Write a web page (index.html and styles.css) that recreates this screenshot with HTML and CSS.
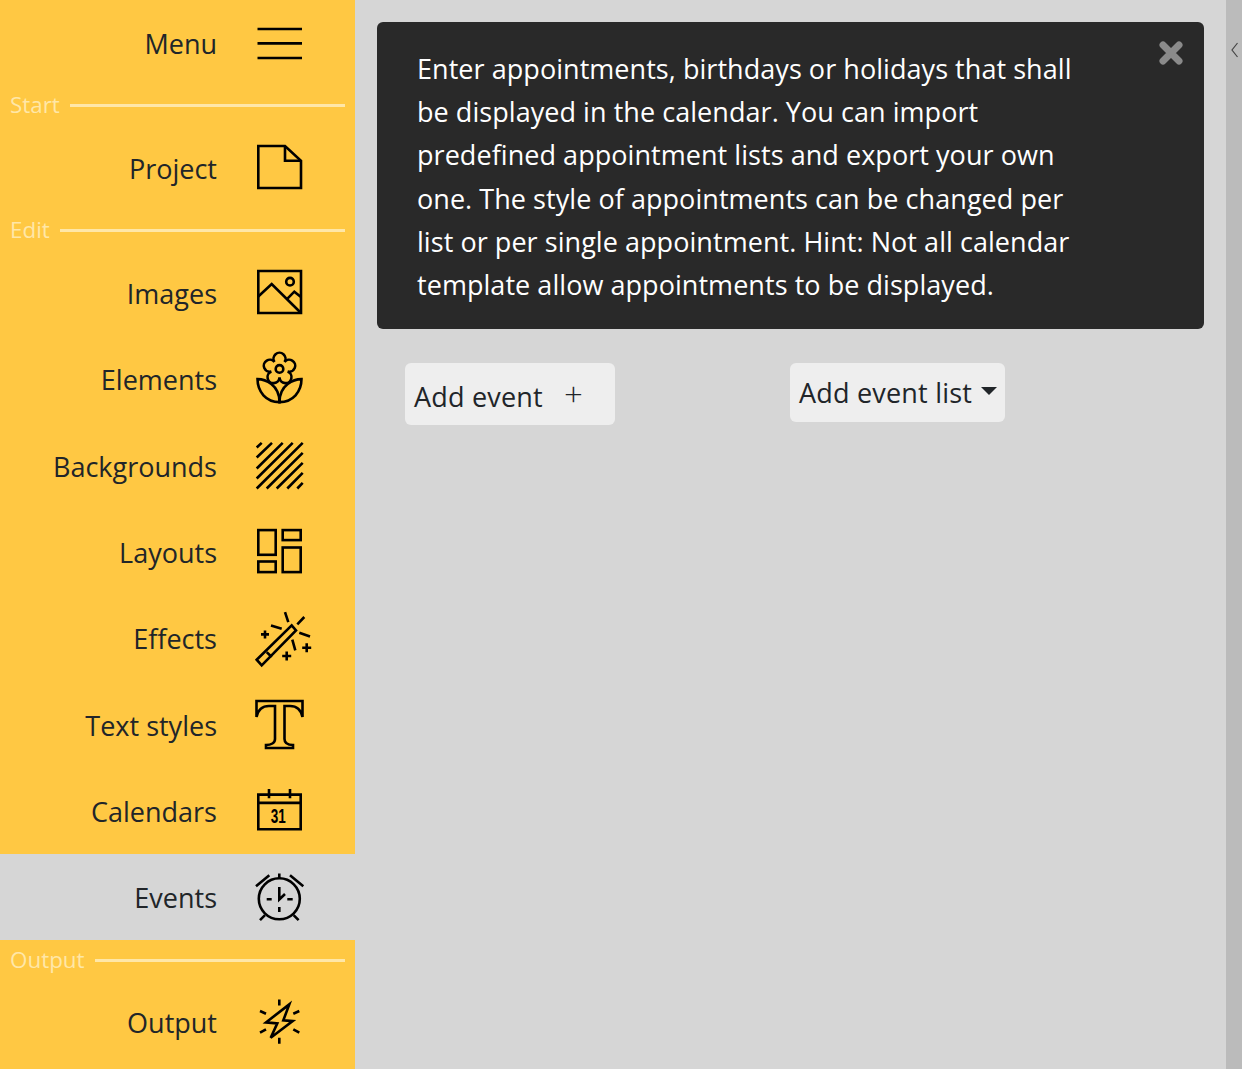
FILE: index.html
```html
<!DOCTYPE html>
<html lang="en">
<head>
    <meta charset="UTF-8">
    <meta name="viewport" content="width=device-width, initial-scale=1.0">
    <title>Calendar editor</title>
    <link rel="stylesheet" href="styles.css">
</head>
<body>
    <nav class="sidebar">
        <div class="nav-item nav-first">
            <span>Menu</span>
            <svg class="icon" viewBox="0 0 50 50"><path d="M2.5 11H47M2.5 25.4H47M2.5 40H47"/></svg>
        </div>

        <div class="nav-label"><span>Start</span></div>
        <div class="nav-item">
            <span>Project</span>
            <svg class="icon" viewBox="0 0 50 50"><path d="M3.3 4H30L46 18.7V46H3.3Z"/><path d="M30 4V18.7H46"/></svg>
        </div>

        <div class="nav-label"><span>Edit</span></div>
        <div class="nav-item">
            <span>Images</span>
            <svg class="icon" viewBox="0 0 50 50"><path d="M3.3 4H46V46H3.3Z"/><path d="M3 29.7L16.7 17L46 46"/><path d="M31.7 32.3L39.3 24.7L46 30"/><circle cx="35" cy="14.7" r="3.8"/></svg>
        </div>
        <div class="nav-item">
            <span>Elements</span>
            <svg class="icon" viewBox="0 1.4 50 50">
                <path d="M19.5 10.4A6 6 0 1 1 29.5 10.4A6 6 0 1 1 32.6 19.9A6 6 0 1 1 24.5 25.8A6 6 0 1 1 16.4 19.9A6 6 0 1 1 19.5 10.4Z"/>
                <circle cx="24.5" cy="17.3" r="3.8"/>
                <path d="M2.5 27.5C10 27.5 24.5 33 24.5 50.5C11 50.5 2.5 40 2.5 27.5Z"/>
                <path d="M46.5 27.5C39 27.5 24.5 33 24.5 50.5C38 50.5 46.5 40 46.5 27.5Z"/>
            </svg>
        </div>
        <div class="nav-item">
            <span>Backgrounds</span>
            <svg class="icon" viewBox="0 -1.2 50 50"><path d="M1.7 6.3L6.7 1.7M1.7 16.3L17 1.7M1.7 27.3L27.7 1.7M1.7 37.3L37.7 1.7M1.7 47.3L47.7 1.7M11.7 47.3L47.7 11.7M21.7 47.3L47.7 21.7M32.3 47.3L47.7 31.7M42.3 47.3L47.7 41.7"/></svg>
        </div>
        <div class="nav-item">
            <span>Layouts</span>
            <svg class="icon" viewBox="0 0 50 50"><rect x="3.3" y="4.1" width="17.4" height="24.7"/><rect x="3.3" y="35.5" width="17.4" height="10.6"/><rect x="27.7" y="4.1" width="18" height="10"/><rect x="27.7" y="21.5" width="18" height="24.6"/></svg>
        </div>
        <div class="nav-item">
            <span>Effects</span>
            <svg class="icon" viewBox="0 0 50 50"><path d="M1.7 46.7L36.7 12.4L41 17.4L6.7 52.4Z"/><path d="M11.7 39.1L16.7 44M30 -.9L33.3 9.1M42.3 11.4L49.3 4M16 12.4L26.7 15.7M44.3 19.7L55 23.4M37.3 26.7L40.3 37.4M6 21.4H14M10 17.4V25.4M47.2 34.7H56.2M51.7 30.2V39.2M27.2 43H36.2M31.7 38.5V47.5"/></svg>
        </div>
        <div class="nav-item">
            <span>Text styles</span>
            <svg class="icon" viewBox="0 0 50 50"><path d="M1.5 2H47.5V18C46 11 42 7 35 7H29.5V40C29.5 44 33 46 38 46V49H11V46C16 46 20 44 20 40V7H14C7 7 3 11 1.5 18Z"/></svg>
        </div>
        <div class="nav-item">
            <span>Calendars</span>
            <svg class="icon" viewBox="0 0 50 50"><path d="M3.3 9.6H45.7V44.3H3.3ZM3.3 17.9H45.7M14 3.9V13.3M35 3.9V13.3"/><text class="cal-day" x="15.7" y="38" textLength="15" lengthAdjust="spacingAndGlyphs">31</text></svg>
        </div>
        <div class="nav-item active">
            <span>Events</span>
            <svg class="icon" viewBox="0 0 50 50"><circle cx="24.3" cy="26.8" r="20.5"/><path d="M1 14.2L14.3 3.2M48.3 14.2L35 3.2M24.3 1.5V6.5M5 48.2L10 43.2M43.6 48.2L38.6 43.2M11.7 27.2H16.7M32.3 27.2H37.7M24.3 35V40M24.3 15V27.5L30 22"/></svg>
        </div>

        <div class="nav-label"><span>Output</span></div>
        <div class="nav-item">
            <span>Output</span>
            <svg class="icon" viewBox="0 0 50 50"><path d="M34.3 7.4L11 25.4L22.3 26.4L15.7 40.7L37.7 24.1L28.3 23.4Z"/><path d="M24.3 2.4V8.4M24.3 40.7V46.7M5 14L11 16.7M44.3 14L38.3 16.7M5 35.7L11 32.4M44.3 35.7L38.3 32.4"/></svg>
        </div>
    </nav>

    <main class="content">
        <div class="alert">
            <p>Enter appointments, birthdays or holidays that shall<br>
            be displayed in the calendar. You can import<br>
            predefined appointment lists and export your own<br>
            one. The style of appointments can be changed per<br>
            list or per single appointment. Hint: Not all calendar<br>
            template allow appointments to be displayed.</p>
            <svg class="alert-close" viewBox="0 0 24 24"><path d="M4 4L20 20M20 4L4 20"/></svg>
        </div>
        <div class="actions">
            <button class="btn btn-add">Add event<span class="plus">+</span></button>
            <button class="btn btn-list">Add event list<span class="caret"></span></button>
        </div>
    </main>

    <aside class="side-handle">
        <svg class="chevron" viewBox="0 0 8 16"><path d="M6.5 1L1 8L6.5 15"/></svg>
    </aside>
</body>
</html>
```

FILE: styles.css
```css
html, body {
    height: 100%;
}
body {
    margin: 0;
    display: flex;
    height: 1069px;
    overflow: hidden;
    background-color: #d6d6d6;
    color: #212529;
    font-family: "Open Sans", "Noto Sans", sans-serif;
    font-size: 27px;
}

/* Sidebar */
.sidebar {
    flex: 0 0 355px;
    background-color: #ffc843;
}
.nav-item {
    height: 86.4px;
    display: flex;
    align-items: center;
    justify-content: flex-end;
    gap: 38px;
    padding-right: 50px;
}
.nav-item span {
    position: relative;
    top: 1.3px;
}
.nav-first {
    height: 85.2px;
}
.nav-item.active {
    background-color: #d6d6d6;
}
.nav-label {
    height: 38.6px;
    box-sizing: border-box;
    padding: 3px 10px 0;
    display: flex;
    align-items: center;
    gap: 10px;
    color: #ffe7a8;
    font-size: 22.4px;
}
.nav-label span {
    position: relative;
    top: -1px;
}
.nav-label::after {
    content: "";
    flex: 1;
    height: 3px;
    background-color: #ffe7a8;
}
.icon {
    flex: 0 0 50px;
    width: 50px;
    height: 50px;
    overflow: visible;
    fill: none;
    stroke: #000;
    stroke-width: 2.6;
}
.cal-day {
    fill: #000;
    stroke: none;
    font-family: "Liberation Sans", sans-serif;
    font-size: 21px;
    font-weight: bold;
}

/* Main column */
.content {
    flex: 1;
    padding: 22px 22px 0;
}
.alert {
    position: relative;
    height: 307px;
    box-sizing: border-box;
    padding: 25px 40px;
    background-color: #292929;
    border-radius: 6px;
    color: #fff;
    line-height: 43.2px;
    letter-spacing: 0.05px;
}
.alert p {
    margin: 0;
    white-space: nowrap;
}
.alert-close {
    position: absolute;
    top: 19px;
    right: 21px;
    width: 24px;
    height: 24px;
    fill: none;
    stroke: #8a8a8a;
    stroke-width: 7;
    stroke-linecap: round;
}
.actions {
    display: flex;
    align-items: flex-start;
    gap: 175px;
    margin: 34px 0 0 28px;
}
.btn {
    border: none;
    border-radius: 6px;
    background-color: #eeeeee;
    color: #212529;
    font: inherit;
    letter-spacing: 0.2px;
    padding: 0 0 0 9px;
    white-space: nowrap;
    display: flex;
    align-items: center;
}
.btn-add {
    width: 210px;
    height: 62px;
    padding-top: 4px;
}
.plus {
    margin-left: 21px;
    margin-top: -6px;
    font-size: 33px;
    font-weight: 300;
}
.btn-list {
    width: 215px;
    height: 59px;
}
.caret {
    margin-left: 9px;
    margin-top: -4px;
    border-top: 8px solid #212529;
    border-left: 8px solid transparent;
    border-right: 8px solid transparent;
}

/* Right handle */
.side-handle {
    flex: 0 0 16px;
    background-color: #bbbbbb;
}
.chevron {
    display: block;
    width: 8px;
    height: 16px;
    margin: 42px 0 0 5px;
    fill: none;
    stroke: #444;
    stroke-width: 1.2;
}
```
